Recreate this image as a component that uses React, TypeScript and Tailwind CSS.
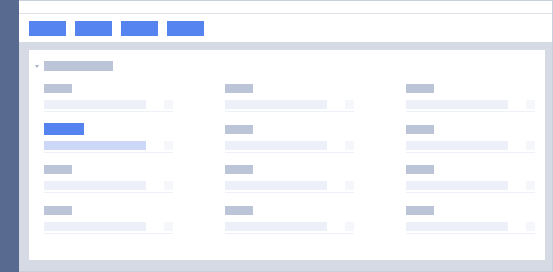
import React from 'react';

const fields = [
  { active: false },
  { active: false },
  { active: false },
  { active: true },
  { active: false },
  { active: false },
  { active: false },
  { active: false },
  { active: false },
  { active: false },
  { active: false },
  { active: false },
];

function Field({ active }: { active: boolean }) {
  return (
    <div className="flex w-[129px] flex-col">
      <div className="flex h-[9px] items-center">
        {active ? (
          <div className="h-[12px] w-[40px] shrink-0 bg-[#5584f1]" />
        ) : (
          <div className="h-[9px] w-[28px] bg-[#bcc4d7]" />
        )}
      </div>
      <div className="mt-[7px] flex h-[9px]">
        <div className={active ? 'w-[102px] bg-[#cdd8f8]' : 'w-[102px] bg-[#edf0f8]'} />
        <div className="ml-[18px] w-[9px] bg-[#f6f7fb]" />
      </div>
      <div className="mt-[2px] h-px w-[129px] bg-[#eef1f7]" />
    </div>
  );
}

export default function App() {
  return (
    <div className="flex h-[272px] w-[553px] overflow-hidden bg-white">
      {/* sidebar */}
      <div className="w-[19px] shrink-0 bg-[#586a8f]" />

      <div className="flex flex-1 flex-col border-t border-r border-b border-[#c9cfdd]">
        {/* top strip */}
        <div className="h-[13px] shrink-0 border-b border-[#dde1e9] bg-white" />

        {/* toolbar */}
        <div className="flex h-[28px] shrink-0 gap-[9px] bg-white pt-[7px] pl-[10px]">
          <div className="h-[15px] w-[37px] bg-[#5584f1]" />
          <div className="h-[15px] w-[37px] bg-[#5584f1]" />
          <div className="h-[15px] w-[37px] bg-[#5584f1]" />
          <div className="h-[15px] w-[37px] bg-[#5584f1]" />
        </div>

        {/* content area */}
        <div className="flex-1 bg-[#d5dae5] pt-[8px] pr-[7px] pl-[10px]">
          <div className="h-[210px] bg-white pt-[11px] pl-[6px]">
            <div className="flex h-[10px] items-center">
              <svg width="4" height="3" viewBox="0 0 4 3" className="mr-[5px]">
                <path d="M0 0 L4 0 L2 3 Z" fill="#a8b2c8" />
              </svg>
              <div className="h-[10px] w-[69px] bg-[#bcc4d7]" />
            </div>

            <div className="mt-[13px] grid grid-cols-[129px_129px_129px] gap-x-[52px] gap-y-[12.67px] pl-[9px]">
              {fields.map((f, i) => (
                <Field key={i} active={f.active} />
              ))}
            </div>
          </div>
        </div>
      </div>
    </div>
  );
}
